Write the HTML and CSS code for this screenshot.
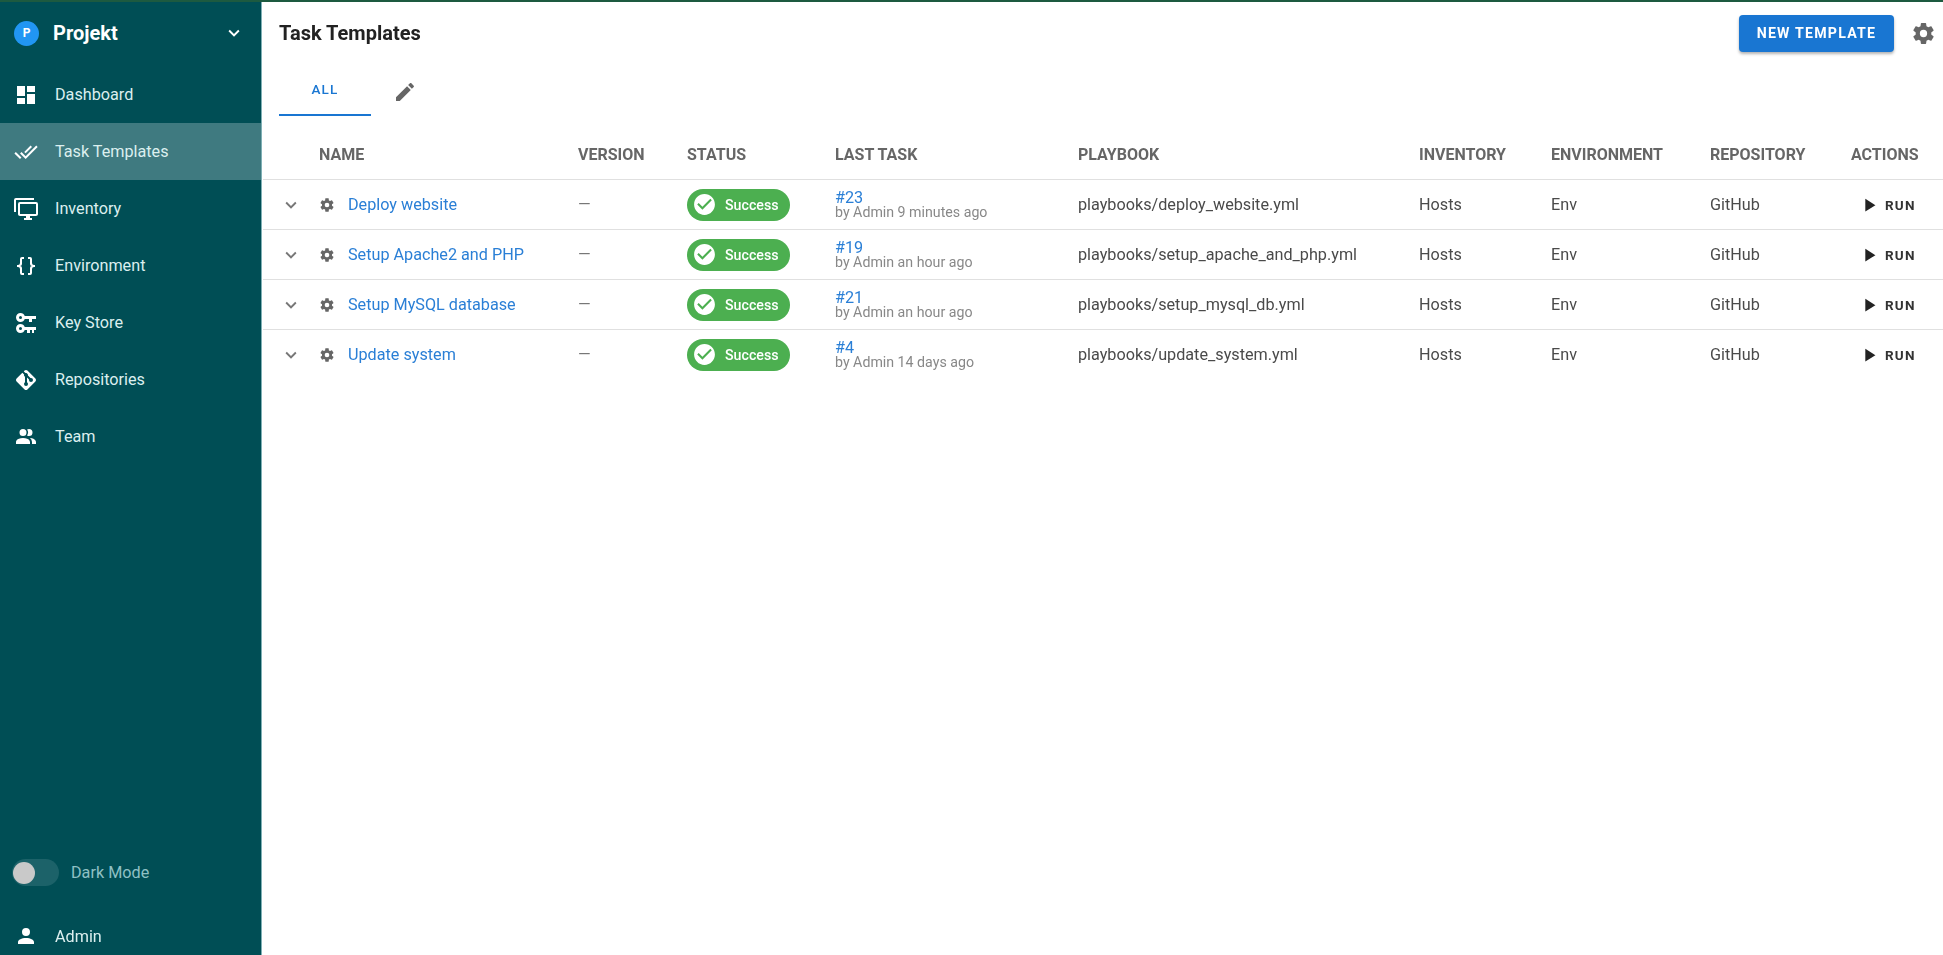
FILE: index.html
```html
<!DOCTYPE html>
<html>
<head>
  <title>Task Templates</title>
  <link rel="stylesheet" href="styles.css">
</head>
<body>
  <!-- icon sprite, used through <use> below -->
  <svg class="sprite" xmlns="http://www.w3.org/2000/svg">
    <symbol id="i-dashboard" viewBox="0 0 24 24"><path d="M13,3V9H21V3M13,21H21V11H13M3,21H11V15H3M3,13H11V3H3V13Z"/></symbol>
    <symbol id="i-check-all" viewBox="0 0 24 24"><path d="M0.41,13.41L6,19L7.41,17.58L1.83,12M22.24,5.58L11.66,16.17L7.5,12L6.07,13.41L11.66,19L23.66,7M18,7L16.59,5.58L10.24,11.93L11.66,13.34L18,7Z"/></symbol>
    <symbol id="i-monitor" viewBox="0 0 24 24"><path d="M22,17V7H6V17H22M22,5A2,2 0 0,1 24,7V17C24,18.11 23.1,19 22,19H16V21H18V23H10V21H12V19H6C4.89,19 4,18.11 4,17V7A2,2 0 0,1 6,5H22M2,3V15H0V3A2,2 0 0,1 2,1H20V3H2Z"/></symbol>
    <symbol id="i-braces" viewBox="0 0 24 24"><path d="M8,3A2,2 0 0,0 6,5V9A2,2 0 0,1 4,11H3V13H4A2,2 0 0,1 6,15V19A2,2 0 0,0 8,21H10V19H8V14A2,2 0 0,0 6,12A2,2 0 0,0 8,10V5H10V3M16,3A2,2 0 0,1 18,5V9A2,2 0 0,0 20,11H21V13H20A2,2 0 0,0 18,15V19A2,2 0 0,1 16,21H14V19H16V14A2,2 0 0,1 18,12A2,2 0 0,1 16,10V5H14V3H16Z"/></symbol>
    <symbol id="i-keys" viewBox="0 0 24 24"><path d="M6.5,2C8.46,2 10.13,3.25 10.74,5H22V8H18V11H15V8H10.74C10.13,9.75 8.46,11 6.5,11C4,11 2,9 2,6.5C2,4 4,2 6.5,2M6.5,5A1.5,1.5 0 0,0 5,6.5A1.5,1.5 0 0,0 6.5,8A1.5,1.5 0 0,0 8,6.5A1.5,1.5 0 0,0 6.5,5M6.5,13C8.46,13 10.13,14.25 10.74,16H22V19H20V22H18V19H16V22H13V19H10.74C10.13,20.75 8.46,22 6.5,22C4,22 2,20 2,17.5C2,15 4,13 6.5,13M6.5,16A1.5,1.5 0 0,0 5,17.5A1.5,1.5 0 0,0 6.5,19A1.5,1.5 0 0,0 8,17.5A1.5,1.5 0 0,0 6.5,16Z"/></symbol>
    <symbol id="i-git" viewBox="0 0 24 24"><path d="M2.6,10.59L8.38,4.8L10.07,6.5C9.83,7.35 10.22,8.28 11,8.73V14.27C10.4,14.61 10,15.26 10,16A2,2 0 0,0 12,18A2,2 0 0,0 14,16C14,15.26 13.6,14.61 13,14.27V9.41L15.07,11.5C15,11.65 15,11.82 15,12A2,2 0 0,0 17,14A2,2 0 0,0 19,12A2,2 0 0,0 17,10C16.82,10 16.65,10 16.5,10.07L13.93,7.5C14.19,6.57 13.71,5.55 12.78,5.16C12.35,5 11.9,4.96 11.5,5.07L9.8,3.38L10.59,2.6C11.37,1.81 12.63,1.81 13.41,2.6L21.4,10.59C22.19,11.37 22.19,12.63 21.4,13.41L13.41,21.4C12.63,22.19 11.37,22.19 10.59,21.4L2.6,13.41C1.81,12.63 1.81,11.37 2.6,10.59Z"/></symbol>
    <symbol id="i-team" viewBox="0 0 24 24"><path d="M16 17V19H2V17S2 13 9 13 16 17 16 17M12.5 7.5A3.5 3.5 0 1 0 9 11A3.5 3.5 0 0 0 12.5 7.5M15.94 13A5.32 5.32 0 0 1 18 17V19H22V17S22 13.37 15.94 13M15 4A3.39 3.39 0 0 0 13.07 4.59A5 5 0 0 1 13.07 10.41A3.39 3.39 0 0 0 15 11A3.5 3.5 0 0 0 15 4Z"/></symbol>
    <symbol id="i-account" viewBox="0 0 24 24"><path d="M12,4A4,4 0 0,1 16,8A4,4 0 0,1 12,12A4,4 0 0,1 8,8A4,4 0 0,1 12,4M12,14C16.42,14 20,15.79 20,18V20H4V18C4,15.79 7.58,14 12,14Z"/></symbol>
    <symbol id="i-cog" viewBox="0 0 24 24"><path d="M12,15.5A3.5,3.5 0 0,1 8.5,12A3.5,3.5 0 0,1 12,8.5A3.5,3.5 0 0,1 15.5,12A3.5,3.5 0 0,1 12,15.5M19.43,12.97C19.47,12.65 19.5,12.33 19.5,12C19.5,11.67 19.47,11.34 19.43,11L21.54,9.37C21.73,9.22 21.78,8.95 21.66,8.73L19.66,5.27C19.54,5.05 19.27,4.96 19.05,5.05L16.56,6.05C16.04,5.66 15.5,5.32 14.87,5.07L14.5,2.42C14.46,2.18 14.25,2 14,2H10C9.75,2 9.54,2.18 9.5,2.42L9.13,5.07C8.5,5.32 7.96,5.66 7.44,6.05L4.95,5.05C4.73,4.96 4.46,5.05 4.34,5.27L2.34,8.73C2.21,8.95 2.27,9.22 2.46,9.37L4.57,11C4.53,11.34 4.5,11.67 4.5,12C4.5,12.33 4.53,12.65 4.57,12.97L2.46,14.63C2.27,14.78 2.21,15.05 2.34,15.27L4.34,18.73C4.46,18.95 4.73,19.03 4.95,18.95L7.44,17.94C7.96,18.34 8.5,18.68 9.13,18.93L9.5,21.58C9.54,21.82 9.75,22 10,22H14C14.25,22 14.46,21.82 14.5,21.58L14.87,18.93C15.5,18.67 16.04,18.34 16.56,17.94L19.05,18.95C19.27,19.03 19.54,18.95 19.66,18.73L21.66,15.27C21.78,15.05 21.73,14.78 21.54,14.63L19.43,12.97Z"/></symbol>
    <symbol id="i-pencil" viewBox="0 0 24 24"><path d="M20.71,7.04C21.1,6.65 21.1,6 20.71,5.63L18.37,3.29C18,2.9 17.35,2.9 16.96,3.29L15.12,5.12L18.87,8.87M3,17.25V21H6.75L17.81,9.93L14.06,6.18L3,17.25Z"/></symbol>
    <symbol id="i-chevron" viewBox="0 0 24 24"><path d="M7.41,8.58L12,13.17L16.59,8.58L18,10L12,16L6,10L7.41,8.58Z"/></symbol>
    <symbol id="i-play" viewBox="0 0 24 24"><path d="M8,5.14V19.14L19,12.14L8,5.14Z"/></symbol>
    <symbol id="i-check-circle" viewBox="0 0 24 24"><path d="M12 2C6.5 2 2 6.5 2 12S6.5 22 12 22 22 17.5 22 12 17.5 2 12 2M10 17L5 12L6.41 10.59L10 14.17L17.59 6.58L19 8L10 17Z"/></symbol>
  </svg>

  <div class="top-line"></div>
  <div class="app">
    <nav class="sidebar">
      <div class="project">
        <span class="avatar">P</span>
        <span class="project-name">Projekt</span>
        <svg class="project-chevron"><use href="#i-chevron"/></svg>
      </div>
      <a class="nav-item"><svg class="nav-icon"><use href="#i-dashboard"/></svg>Dashboard</a>
      <a class="nav-item active"><svg class="nav-icon"><use href="#i-check-all"/></svg>Task Templates</a>
      <a class="nav-item"><svg class="nav-icon"><use href="#i-monitor"/></svg>Inventory</a>
      <a class="nav-item"><svg class="nav-icon"><use href="#i-braces"/></svg>Environment</a>
      <a class="nav-item"><svg class="nav-icon"><use href="#i-keys"/></svg>Key Store</a>
      <a class="nav-item"><svg class="nav-icon"><use href="#i-git"/></svg>Repositories</a>
      <a class="nav-item"><svg class="nav-icon"><use href="#i-team"/></svg>Team</a>
      <div class="dark-mode">
        <span class="switch"><span class="switch-thumb"></span></span>
        <span>Dark Mode</span>
      </div>
      <a class="nav-item user"><svg class="nav-icon"><use href="#i-account"/></svg>Admin</a>
    </nav>

    <main class="content">
      <header class="toolbar">
        <h1>Task Templates</h1>
        <button class="new-btn">NEW TEMPLATE</button>
        <svg class="settings"><use href="#i-cog"/></svg>
      </header>

      <div class="tabs">
        <span class="tab">ALL</span>
        <svg class="tab-edit"><use href="#i-pencil"/></svg>
      </div>

      <table class="templates">
        <colgroup>
          <col class="c-expand"><col class="c-name"><col class="c-version"><col class="c-status"><col class="c-last">
          <col class="c-playbook"><col class="c-inventory"><col class="c-env"><col class="c-repo"><col class="c-actions">
        </colgroup>
        <thead>
          <tr>
            <th></th><th>NAME</th><th>VERSION</th><th>STATUS</th><th>LAST TASK</th>
            <th>PLAYBOOK</th><th>INVENTORY</th><th>ENVIRONMENT</th><th>REPOSITORY</th><th>ACTIONS</th>
          </tr>
        </thead>
        <tbody>
          <tr>
            <td class="expand"><svg class="row-chevron"><use href="#i-chevron"/></svg></td>
            <td><div class="name"><svg class="row-cog"><use href="#i-cog"/></svg><a>Deploy website</a></div></td>
            <td class="empty">—</td>
            <td><span class="chip"><svg class="chip-icon"><use href="#i-check-circle"/></svg>Success</span></td>
            <td><a class="task-no">#23</a><div class="task-by">by Admin 9 minutes ago</div></td>
            <td>playbooks/deploy_website.yml</td>
            <td>Hosts</td><td>Env</td><td>GitHub</td>
            <td><span class="run"><svg class="run-icon"><use href="#i-play"/></svg>RUN</span></td>
          </tr>
          <tr>
            <td class="expand"><svg class="row-chevron"><use href="#i-chevron"/></svg></td>
            <td><div class="name"><svg class="row-cog"><use href="#i-cog"/></svg><a>Setup Apache2 and PHP</a></div></td>
            <td class="empty">—</td>
            <td><span class="chip"><svg class="chip-icon"><use href="#i-check-circle"/></svg>Success</span></td>
            <td><a class="task-no">#19</a><div class="task-by">by Admin an hour ago</div></td>
            <td>playbooks/setup_apache_and_php.yml</td>
            <td>Hosts</td><td>Env</td><td>GitHub</td>
            <td><span class="run"><svg class="run-icon"><use href="#i-play"/></svg>RUN</span></td>
          </tr>
          <tr>
            <td class="expand"><svg class="row-chevron"><use href="#i-chevron"/></svg></td>
            <td><div class="name"><svg class="row-cog"><use href="#i-cog"/></svg><a>Setup MySQL database</a></div></td>
            <td class="empty">—</td>
            <td><span class="chip"><svg class="chip-icon"><use href="#i-check-circle"/></svg>Success</span></td>
            <td><a class="task-no">#21</a><div class="task-by">by Admin an hour ago</div></td>
            <td>playbooks/setup_mysql_db.yml</td>
            <td>Hosts</td><td>Env</td><td>GitHub</td>
            <td><span class="run"><svg class="run-icon"><use href="#i-play"/></svg>RUN</span></td>
          </tr>
          <tr>
            <td class="expand"><svg class="row-chevron"><use href="#i-chevron"/></svg></td>
            <td><div class="name"><svg class="row-cog"><use href="#i-cog"/></svg><a>Update system</a></div></td>
            <td class="empty">—</td>
            <td><span class="chip"><svg class="chip-icon"><use href="#i-check-circle"/></svg>Success</span></td>
            <td><a class="task-no">#4</a><div class="task-by">by Admin 14 days ago</div></td>
            <td>playbooks/update_system.yml</td>
            <td>Hosts</td><td>Env</td><td>GitHub</td>
            <td><span class="run"><svg class="run-icon"><use href="#i-play"/></svg>RUN</span></td>
          </tr>
        </tbody>
      </table>
    </main>
  </div>
</body>
</html>
```

FILE: styles.css
```css
/* Main styles */
html, body {
  height: 100%;
}
body {
  margin: 0;
  display: flex;
  flex-direction: column;
  overflow: hidden;
  background-color: #fff;
  color: #4a4a4a;
  font-family: Roboto, "Liberation Sans", sans-serif;
  font-size: 16.2px;
}
.sprite {
  display: none;
}
svg {
  fill: currentColor;
  flex: none;
}
.top-line {
  height: 2px;
  background-color: #1d5a40;
}
.app {
  flex: 1;
  display: flex;
  min-height: 0;
  filter: blur(0.4px); /* the reference is a soft, upscaled capture */
}

/* Sidebar */
.sidebar {
  width: 262px;
  flex: none;
  display: flex;
  flex-direction: column;
  background-color: #004e55;
  border-right: 1px solid #7fb0b5;
  box-sizing: border-box;
  color: #dcefef;
}
.project {
  height: 62px;
  flex: none;
  display: flex;
  align-items: center;
  padding: 0 0 2px 14px;
  color: #fff;
}
.avatar {
  width: 25px;
  height: 25px;
  border-radius: 50%;
  background-color: #2196f3;
  color: #fff;
  font-size: 12px;
  font-weight: 700;
  line-height: 25px;
  text-align: center;
}
.project-name {
  flex: 1;
  margin-left: 14px;
  font-size: 20px;
  font-weight: 700;
}
.project-chevron {
  width: 22px;
  height: 22px;
  margin-right: 16px;
}
.nav-item {
  height: 57px;
  flex: none;
  display: flex;
  align-items: center;
  padding-left: 14px;
  font-size: 16.2px;
}
.nav-item.active {
  background-color: #3f7a80;
}
.nav-item.user {
  height: 38px;
}
.nav-icon {
  width: 24px;
  height: 24px;
  margin-right: 17px;
  color: #fff;
}
.dark-mode {
  margin-top: auto;
  margin-bottom: 31px;
  display: flex;
  align-items: center;
  padding-left: 12px;
  color: #8fc0c4;
  font-size: 16.2px;
}
.switch {
  width: 47px;
  height: 27px;
  margin-right: 12px;
  border-radius: 14px;
  background-color: #1c6269;
  display: flex;
  align-items: center;
}
.switch-thumb {
  width: 22px;
  height: 22px;
  margin-left: 1px;
  border-radius: 50%;
  background-color: #c9c9c9;
}

/* Page */
.content {
  flex: 1;
  min-width: 0;
}
.toolbar {
  height: 62px;
  display: flex;
  align-items: center;
  padding: 0 7px 0 17px;
}
.toolbar h1 {
  flex: 1;
  margin: 0;
  color: #222;
  font-size: 20px;
  font-weight: 700;
}
.new-btn {
  width: 155px;
  height: 37px;
  border: 0;
  border-radius: 4px;
  background-color: #1976d2;
  box-shadow: 0 2px 3px rgba(0, 0, 0, 0.3);
  color: #fff;
  font-family: inherit;
  font-size: 14.2px;
  font-weight: 700;
  letter-spacing: 1.2px;
}
.settings {
  width: 25px;
  height: 25px;
  margin-left: 17px;
  color: #666;
}
.tabs {
  height: 52px;
  display: flex;
  align-items: center;
  padding-left: 17px;
}
.tab {
  width: 92px;
  height: 52px;
  box-sizing: border-box;
  border-bottom: 2px solid #1976d2;
  color: #1976d2;
  font-size: 13.5px;
  font-weight: 500;
  letter-spacing: 1.2px;
  line-height: 50px;
  text-align: center;
}
.tab-edit {
  width: 24px;
  height: 24px;
  margin: 3px 0 0 22px;
  color: #666;
}

/* Templates table */
.templates {
  width: 1680px;
  margin: 13px 0 0 1px;
  border-collapse: collapse;
  table-layout: fixed;
}
.c-expand { width: 40px; }
.c-name { width: 259px; }
.c-version { width: 109px; }
.c-status { width: 148px; }
.c-last { width: 243px; }
.c-playbook { width: 341px; }
.c-inventory { width: 132px; }
.c-env { width: 159px; }
.c-repo { width: 141px; }
.c-actions { width: 108px; }
.templates th {
  height: 50px;
  padding: 0 0 0 16px;
  border-bottom: 1px solid #e0e0e0;
  color: #666;
  font-size: 16px;
  font-weight: 700;
  text-align: left;
  white-space: nowrap;
}
.templates td {
  height: 49px;
  padding: 0 0 0 16px;
  border-bottom: 1px solid #e0e0e0;
  white-space: nowrap;
}
.templates tbody tr:last-child td {
  border-bottom: 0;
}
.templates td.expand {
  padding-left: 17px;
}
.templates td.empty {
  color: #777;
}
.row-chevron {
  display: block;
  width: 22px;
  height: 22px;
  color: #777;
}
.name {
  display: flex;
  align-items: center;
}
.name a {
  color: #2a7fd6;
}
.row-cog {
  width: 16px;
  height: 16px;
  margin-right: 13px;
  color: #666;
}
.chip {
  width: 103px;
  height: 32px;
  display: inline-flex;
  align-items: center;
  border-radius: 16px;
  background-color: #4caf50;
  color: #fff;
  font-size: 14.2px;
  font-weight: 500;
  vertical-align: middle;
}
.chip-icon {
  width: 25px;
  height: 25px;
  margin: 0 8px 0 5px;
}
.task-no {
  display: block;
  color: #2a7fd6;
  font-size: 16.2px;
  line-height: 15px;
}
.task-by {
  color: #888;
  font-size: 14.2px;
  line-height: 15px;
}
.run {
  display: flex;
  align-items: center;
  margin-left: 7px;
  color: #333;
  font-size: 13.5px;
  font-weight: 700;
  letter-spacing: 1.2px;
}
.run-icon {
  width: 22px;
  height: 22px;
  margin-right: 5px;
  color: #222;
}
```
